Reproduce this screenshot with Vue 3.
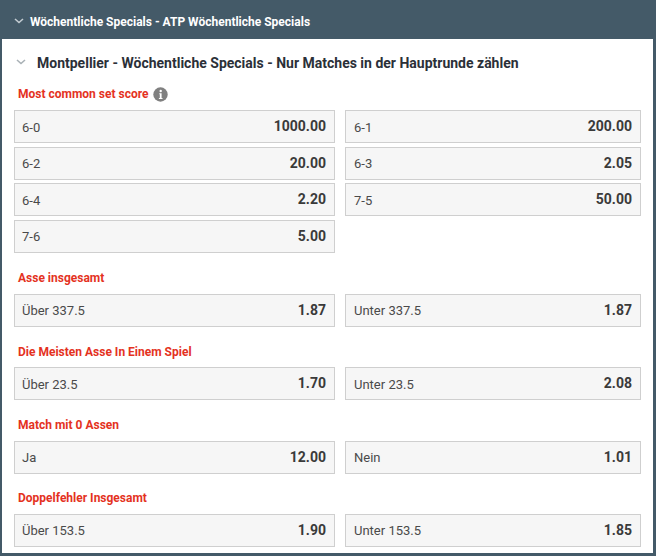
<template>
  <div class="page">
    <header class="top">
      <svg class="chev" width="10" height="6" viewBox="0 0 10 6"><path d="M1 1l4 3.5L9 1" fill="none" stroke="#c3ccd2" stroke-width="1.6"/></svg>
      <span>Wöchentliche Specials - ATP Wöchentliche Specials</span>
    </header>
    <main class="panel">
      <div class="title">
        <svg class="chev2" width="10" height="6" viewBox="0 0 10 6"><path d="M1 1l4 3.5L9 1" fill="none" stroke="#a9b1b6" stroke-width="1.6"/></svg>
        <h1>Montpellier - Wöchentliche Specials - Nur Matches in der Hauptrunde zählen</h1>
      </div>
      <section v-for="s in sections" :key="s.name" class="section">
        <h2>{{ s.name }}
          <svg v-if="s.info" class="info" width="15" height="15" viewBox="0 0 15 15"><circle cx="7.5" cy="7.5" r="7.2" fill="#808080"/><circle cx="7.7" cy="4" r="1.2" fill="#fff"/><path d="M6.3 6.3h2.3v4.6h.9v1H5.9v-1h.9V7.3h-.5z" fill="#fff"/></svg>
        </h2>
        <div class="grid">
          <div v-for="c in s.cells" :key="c[0]" class="cell">
            <span class="lab">{{ c[0] }}</span><b>{{ c[1] }}</b>
          </div>
        </div>
      </section>
    </main>
  </div>
</template>

<script setup>
const sections = [
  { name: 'Most common set score', info: true, cells: [['6-0','1000.00'],['6-1','200.00'],['6-2','20.00'],['6-3','2.05'],['6-4','2.20'],['7-5','50.00'],['7-6','5.00']] },
  { name: 'Asse insgesamt', cells: [['Über 337.5','1.87'],['Unter 337.5','1.87']] },
  { name: 'Die Meisten Asse In Einem Spiel', cells: [['Über 23.5','1.70'],['Unter 23.5','2.08']] },
  { name: 'Match mit 0 Assen', cells: [['Ja','12.00'],['Nein','1.01']] },
  { name: 'Doppelfehler Insgesamt', cells: [['Über 153.5','1.90'],['Unter 153.5','1.85']] },
]
</script>

<style>
html, body { margin: 0; background: #445a68; }
</style>
<style scoped>
.page { width: 656px; height: 556px; background: #445a68; font-family: Roboto, "Liberation Sans", sans-serif; overflow: hidden; }
.top { height: 39px; box-sizing: border-box; padding: 3px 0 0 14px; display: flex; align-items: center; gap: 6px; color: #fff; font-size: 12px; font-weight: 700; }
.top span { margin-top: 1px; }
.chev { flex: none; }
.panel { margin: 0 3px 0 2px; height: 514px; box-sizing: border-box; background: #fff; padding: 0 12px 0 12px; }
.title { height: 46px; display: flex; align-items: center; }
.chev2 { margin-left: 2px; flex: none; }
h1 { margin: 2px 0 0 11px; font-size: 14px; font-weight: 700; color: #2b3038; white-space: nowrap; }
.section { margin-bottom: 15.33px; }
.section:first-of-type { margin-bottom: 16px; }
h2 { margin: 0 0 8px 4px; height: 17px; box-sizing: border-box; display: flex; align-items: center; gap: 5px; font-size: 12px; font-weight: 700; color: #e4321e; }
.section + .section h2 { padding-top: 2px; }
.info { flex: none; margin-top: 1px; }
.grid { display: grid; grid-template-columns: 321px 296px; column-gap: 10px; row-gap: 3.67px; }
.cell { height: 33px; box-sizing: border-box; border: 1px solid #cfcfcf; background: #f6f6f6; display: flex; justify-content: space-between; align-items: center; padding: 0 8px 0 7px; font-size: 13px; color: #4a4a4a; }
.cell:nth-child(even) { padding-left: 8px; }
.cell b { font-size: 14px; font-weight: 700; color: #3a3a3a; margin-top: -1px; }
.lab { margin-top: 1px; }
</style>
